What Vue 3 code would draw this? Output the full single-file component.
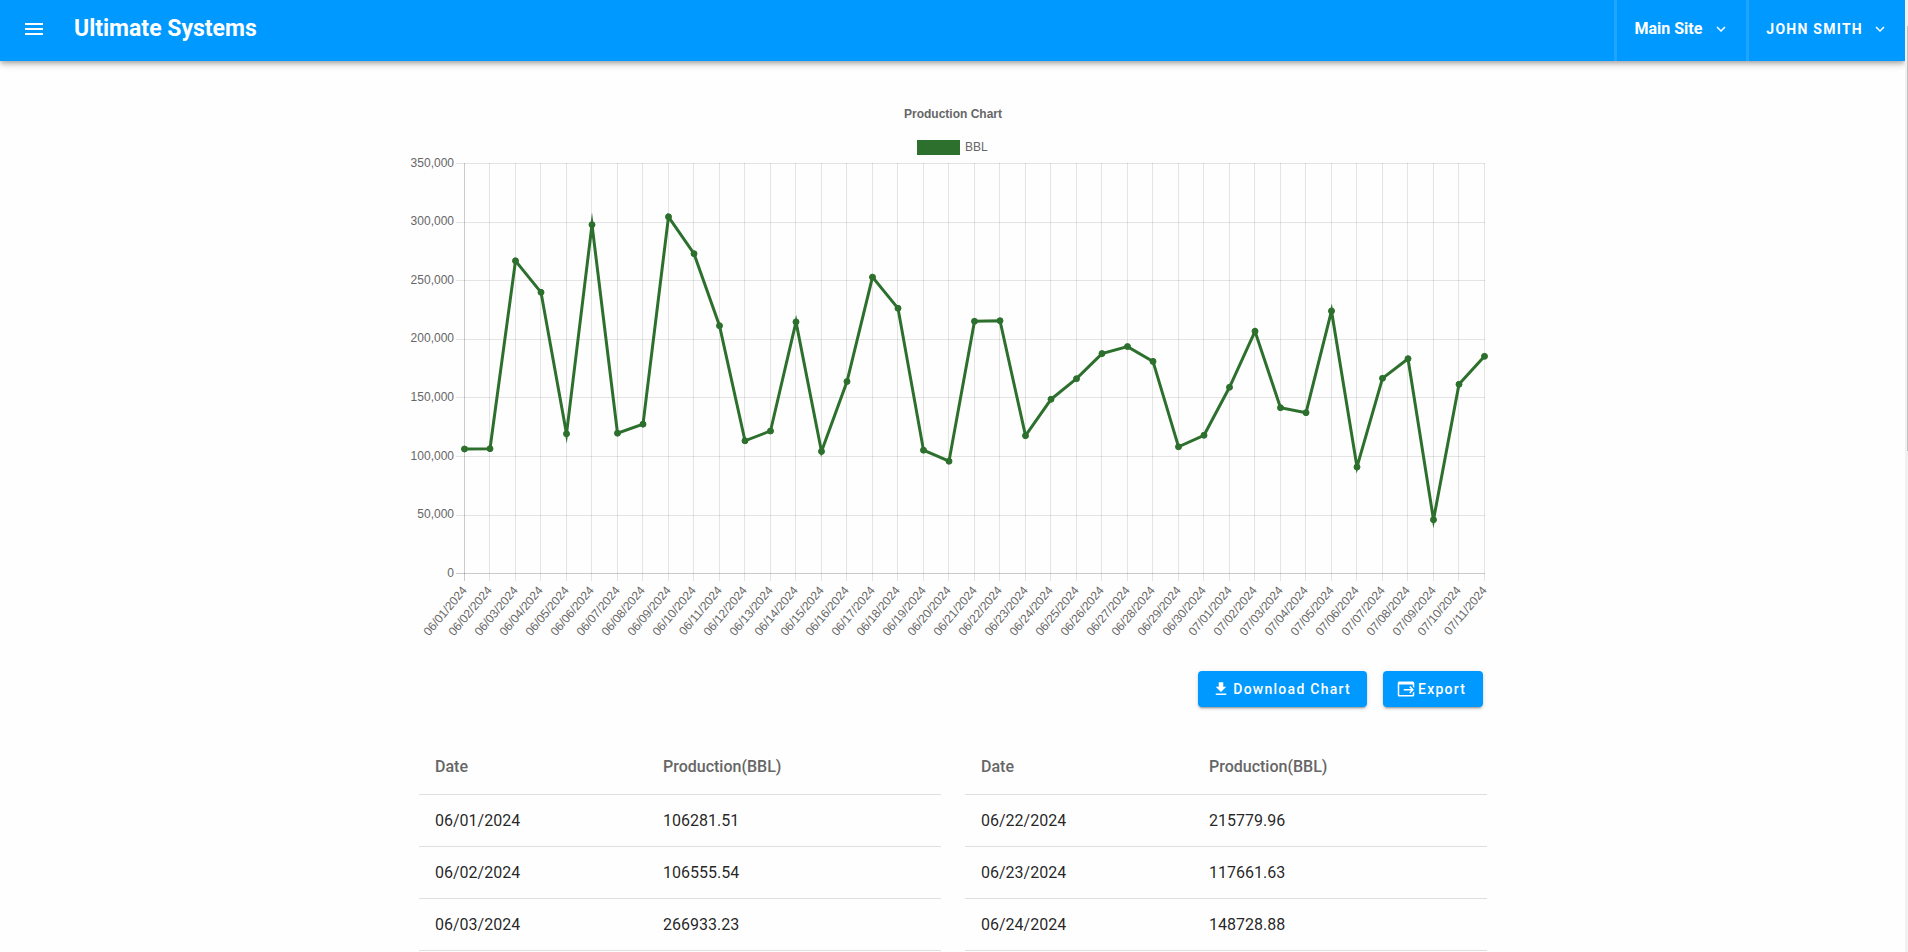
<script setup>
const series = [
  ['06/01/2024', 106281.51], ['06/02/2024', 106555.54], ['06/03/2024', 266933.23],
  ['06/04/2024', 240050], ['06/05/2024', 119250], ['06/06/2024', 297760],
  ['06/07/2024', 119770], ['06/08/2024', 127500], ['06/09/2024', 304500],
  ['06/10/2024', 273000], ['06/11/2024', 211560], ['06/12/2024', 113300],
  ['06/13/2024', 121650], ['06/14/2024', 214800], ['06/15/2024', 104200],
  ['06/16/2024', 163900], ['06/17/2024', 253000], ['06/18/2024', 226400],
  ['06/19/2024', 105250], ['06/20/2024', 95860], ['06/21/2024', 215300],
  ['06/22/2024', 215779.96], ['06/23/2024', 117661.63], ['06/24/2024', 148728.88],
  ['06/25/2024', 166300], ['06/26/2024', 187700], ['06/27/2024', 193700],
  ['06/28/2024', 181060], ['06/29/2024', 108200], ['06/30/2024', 118000],
  ['07/01/2024', 158950], ['07/02/2024', 206760], ['07/03/2024', 141540],
  ['07/04/2024', 137270], ['07/05/2024', 224080], ['07/06/2024', 90915],
  ['07/07/2024', 166600], ['07/08/2024', 183370], ['07/09/2024', 45930],
  ['07/10/2024', 161500], ['07/11/2024', 185370],
]

const plot = { left: 62.5, right: 1082.5, top: 67.5, bottom: 477.5 }
const maxValue = 350000
const step = (plot.right - plot.left) / (series.length - 1)

const points = series.map(([date, value], i) => {
  const x = plot.left + i * step
  return {
    date,
    x,
    grid: Math.floor(x - 0.5) + 0.5,
    y: plot.bottom - (value / maxValue) * (plot.bottom - plot.top),
  }
})
const line = points.map((p) => `${p.x},${p.y}`).join(' ')

const levels = Array.from({ length: 8 }, (_, i) => {
  const y = 67.25 + i * 58.55
  return {
    label: (maxValue - i * 50000).toLocaleString('en-US'),
    y: Math.round(y) + 0.5,
    baseline: Math.floor(y) + 4,
  }
})

const tables = [series.slice(0, 3), series.slice(21, 24)]
</script>

<template>
  <div class="shell">
    <div class="page">
      <header class="bar">
        <button class="menu" type="button" aria-label="Open menu">
          <svg viewBox="0 0 24 24" width="24" height="24"><path d="M3,6H21V8H3V6M3,11H21V13H3V11M3,16H21V18H3V16Z" /></svg>
        </button>
        <h1 class="brand">Ultimate Systems</h1>
        <button class="picker" type="button">
          <span>Main Site</span>
          <svg viewBox="0 0 24 24" width="18" height="18"><path d="M7.41,8.58L12,13.17L16.59,8.58L18,10L12,16L6,10L7.41,8.58Z" /></svg>
        </button>
        <button class="picker user" type="button">
          <span>JOHN SMITH</span>
          <svg viewBox="0 0 24 24" width="18" height="18"><path d="M7.41,8.58L12,13.17L16.59,8.58L18,10L12,16L6,10L7.41,8.58Z" /></svg>
        </button>
      </header>

      <main class="content">
        <svg class="chart" viewBox="0 0 1101 550" role="img" aria-label="Production Chart">
          <text class="title" x="551" y="22">Production Chart</text>
          <rect class="swatch" x="516.5" y="45.5" width="40" height="12" />
          <text x="563" y="55">BBL</text>

          <g class="grid">
            <line v-for="(p, i) in points" :key="p.date" :class="{ zero: i === 0 }" :x1="p.grid" :x2="p.grid" y1="67" y2="485" />
            <line v-for="(l, i) in levels" :key="l.label" :class="{ zero: i === 7 }" x1="54" x2="1083" :y1="l.y" :y2="l.y" />
          </g>

          <g class="y-labels">
            <text v-for="l in levels" :key="l.label" x="52" :y="l.baseline">{{ l.label }}</text>
          </g>
          <g class="x-labels">
            <text v-for="p in points" :key="p.date" :transform="`translate(${p.grid} 492) rotate(-50)`" y="4">{{ p.date }}</text>
          </g>

          <polyline class="line" :points="line" />
          <circle v-for="p in points" :key="p.date" class="dot" :cx="p.x" :cy="p.y" r="3" />
        </svg>

        <div class="actions">
          <button class="action" type="button">
            <svg viewBox="0 0 24 24" width="18" height="18"><path d="M5,20H19V18H5M19,9H15V3H9V9H5L12,16L19,9Z" /></svg>
            <span>Download Chart</span>
          </button>
          <button class="action" type="button">
            <svg viewBox="0 0 24 24" width="18" height="18"><path d="M9,12H18.8L16.3,9.5L17.7,8.1L22.6,13L17.7,17.9L16.3,16.5L18.8,14H9V12M21,17.4V20H3V6H21V8.6L23,10.6V4A2,2 0 0,0 21,2H3A2,2 0 0,0 1,4V20A2,2 0 0,0 3,22H21A2,2 0 0,0 23,20V15.4L21,17.4Z" /></svg>
            <span>Export</span>
          </button>
        </div>

        <div class="tables">
          <table v-for="(rows, i) in tables" :key="i">
            <thead>
              <tr><th scope="col">Date</th><th scope="col">Production(BBL)</th></tr>
            </thead>
            <tbody>
              <tr v-for="[date, value] in rows" :key="date">
                <td>{{ date }}</td>
                <td>{{ value }}</td>
              </tr>
            </tbody>
          </table>
        </div>
      </main>
    </div>
    <div class="track"><div class="thumb"></div></div>
  </div>
</template>

<style>
body {
  margin: 0;
  background: #fefefe;
}
</style>

<style scoped>
.shell {
  display: grid;
  grid-template-columns: minmax(0, 1fr) 3px;
  min-height: 100vh;
  font-family: Roboto, "Liberation Sans", sans-serif;
  color: rgba(0, 0, 0, 0.87);
}

.page {
  overflow: hidden;
}

button {
  border: 0;
  margin: 0;
  color: #fff;
  font-family: inherit;
  cursor: pointer;
}

button svg {
  display: block;
  flex: none;
  fill: currentColor;
}

.bar {
  display: flex;
  height: 61px;
  background: #0099ff;
  box-shadow: 0 2px 4px -1px rgba(0, 0, 0, 0.2), 0 4px 5px rgba(0, 0, 0, 0.14), 0 1px 10px rgba(0, 0, 0, 0.12);
  color: #fff;
}

.menu {
  display: flex;
  align-items: center;
  padding: 0 28px 3px 22px;
  background: none;
}

.brand {
  flex: 1;
  margin: 0;
  font-size: 23px;
  font-weight: 700;
  line-height: 58px;
}

.picker {
  display: flex;
  align-items: center;
  gap: 10px;
  padding: 0 16px 3px 17px;
  border-left: 3px solid #1fa5ff;
  background: none;
  font-size: 16px;
  font-weight: 700;
  line-height: 20px;
}

.user {
  gap: 8px;
  font-size: 14px;
  letter-spacing: 0.09em;
}

.content {
  max-width: 1101px;
  margin: 0 auto;
  padding-top: 35px;
}

.chart {
  display: block;
  width: 100%;
  font-family: "Liberation Sans", Arial, sans-serif;
  font-size: 12px;
  fill: #666;
}

.title {
  font-weight: 700;
  text-anchor: middle;
}

.grid line {
  stroke: rgba(0, 0, 0, 0.1);
}

.grid .zero {
  stroke: rgba(0, 0, 0, 0.2);
}

.y-labels,
.x-labels {
  text-anchor: end;
}

.swatch {
  fill: #2d702d;
  stroke: #2d702d;
  stroke-width: 3;
}

.line {
  fill: none;
  stroke: #2d702d;
  stroke-width: 3;
  stroke-miterlimit: 10;
}

.dot {
  fill: #2d702d;
  stroke: #2d702d;
}

.actions {
  display: flex;
  justify-content: flex-end;
  gap: 16px;
  padding: 25px 20px 31px;
}

.action {
  display: flex;
  align-items: center;
  gap: 3px;
  min-width: 100px;
  height: 36px;
  padding: 0 16px 0 14px;
  border-radius: 4px;
  background: #0099ff;
  box-shadow: 0 3px 1px -2px rgba(0, 0, 0, 0.2), 0 2px 2px rgba(0, 0, 0, 0.14), 0 1px 5px rgba(0, 0, 0, 0.12);
  font-size: 14px;
  font-weight: 500;
  letter-spacing: 0.09em;
}

.tables {
  display: grid;
  grid-template-columns: 1fr 1fr;
  gap: 24px;
  padding: 0 16px 0 17px;
}

table {
  width: 100%;
  border-collapse: separate;
  border-spacing: 0;
  table-layout: fixed;
  font-size: 16px;
}

th,
td {
  box-sizing: border-box;
  height: 52px;
  padding: 0 16px;
  border-bottom: 1px solid #dfdfdf;
  text-align: left;
}

th {
  height: 57px;
  color: #666;
  font-weight: 500;
}

th:first-child {
  width: 228px;
}

.track {
  padding: 26px 0 0 2px;
  background: #f1f1f1;
}

.thumb {
  height: 425px;
  background: #c1c1c1;
}
</style>
